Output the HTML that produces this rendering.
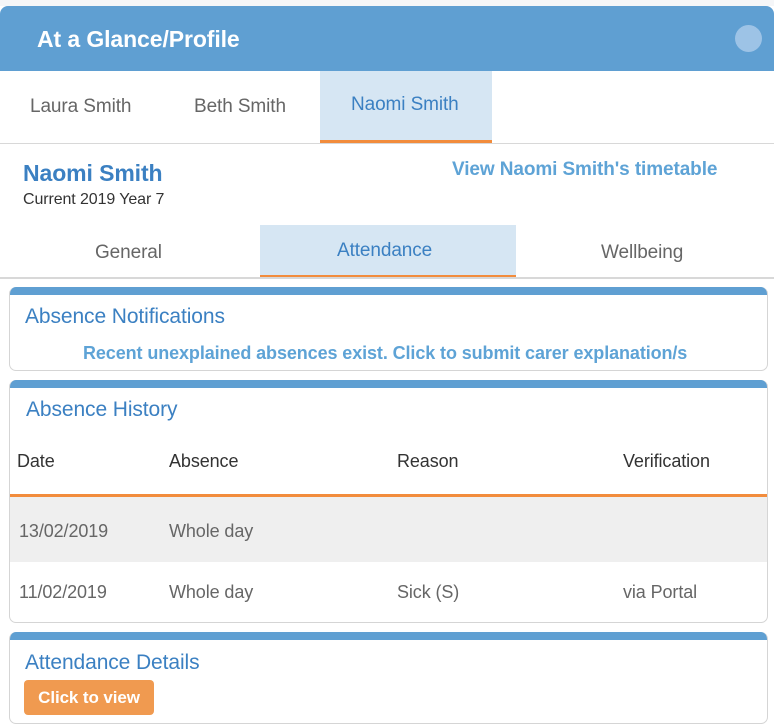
<!DOCTYPE html>
<html><head><style>
*{box-sizing:border-box;margin:0;padding:0}
body{width:774px;height:728px;background:#fff;font-family:"Liberation Sans",sans-serif;position:relative;overflow:hidden;letter-spacing:-0.1px}
.a{position:absolute;white-space:nowrap}
.hdr{left:0;top:6px;width:774px;height:65px;background:#5f9fd2;border-radius:8px 8px 0 0}
.card{position:absolute;left:9px;width:759px;border:1px solid #d5d5d5;border-top:none;border-radius:7px;background:#fff;overflow:hidden}
.card .bar{height:8px;background:#5f9fd2}
.blue{color:#3b80c2}
.lb{color:#5ea3d6}
.g{color:#666}
</style></head><body>
<div style="position:absolute;left:0;top:0;width:774px;height:6px;background:#f5f6f8"></div>
<div class="a hdr"></div>
<div class="a" style="left:37px;top:26px;font-size:23px;color:#fff;font-weight:bold">At a Glance/Profile</div>
<div class="a" style="left:735px;top:25px;width:27px;height:27px;border-radius:50%;background:#9dc3e6"></div>

<div class="a" style="left:320px;top:71px;width:172px;height:72px;background:#d6e6f3;border-bottom:3px solid #f28c3c"></div>
<div class="a" style="left:0;top:143px;width:774px;height:1px;background:#d8d8d8"></div>
<div class="a g" style="left:30px;top:96px;font-size:19px">Laura Smith</div>
<div class="a g" style="left:194px;top:96px;font-size:19px">Beth Smith</div>
<div class="a blue" style="left:351px;top:94px;font-size:19px">Naomi Smith</div>

<div class="a blue" style="left:23px;top:160px;font-size:23px;font-weight:bold">Naomi Smith</div>
<div class="a" style="left:23px;top:191px;font-size:16px;color:#333">Current 2019 Year 7</div>
<div class="a lb" style="left:452px;top:159px;font-size:19px;font-weight:bold">View Naomi Smith's timetable</div>

<div class="a" style="left:260px;top:225px;width:256px;height:53px;background:#d6e6f3;border-bottom:3px solid #f28c3c"></div>
<div class="a" style="left:0;top:277px;width:774px;height:2px;background:#d8d8d8"></div>
<div class="a g" style="left:95px;top:242px;font-size:19px">General</div>
<div class="a blue" style="left:337px;top:240px;font-size:19px">Attendance</div>
<div class="a g" style="left:601px;top:242px;font-size:19px">Wellbeing</div>

<div class="card" style="top:287px;height:84px"><div class="bar"></div></div>
<div class="a blue" style="left:25px;top:305px;font-size:21px">Absence Notifications</div>
<div class="a lb" style="left:83px;top:343px;font-size:18px;font-weight:bold">Recent unexplained absences exist. Click to submit carer explanation/s</div>

<div class="card" style="top:380px;height:243px"><div class="bar"></div></div>
<div class="a blue" style="left:26px;top:398px;font-size:21px">Absence History</div>
<div class="a" style="left:17px;top:451px;font-size:18px;color:#333">Date</div>
<div class="a" style="left:169px;top:451px;font-size:18px;color:#333">Absence</div>
<div class="a" style="left:397px;top:451px;font-size:18px;color:#333">Reason</div>
<div class="a" style="left:623px;top:451px;font-size:18px;color:#333">Verification</div>
<div class="a" style="left:10px;top:494px;width:757px;height:3px;background:#f28c3c"></div>
<div class="a" style="left:10px;top:497px;width:757px;height:65px;background:#efefef"></div>
<div class="a g" style="left:19px;top:521px;font-size:18px">13/02/2019</div>
<div class="a g" style="left:169px;top:521px;font-size:18px">Whole day</div>
<div class="a g" style="left:19px;top:582px;font-size:18px">11/02/2019</div>
<div class="a g" style="left:169px;top:582px;font-size:18px">Whole day</div>
<div class="a g" style="left:397px;top:582px;font-size:18px">Sick (S)</div>
<div class="a g" style="left:623px;top:582px;font-size:18px">via Portal</div>

<div class="card" style="top:632px;height:92px"><div class="bar"></div></div>
<div class="a blue" style="left:25px;top:651px;font-size:21px">Attendance Details</div>
<div class="a" style="left:24px;top:680px;width:130px;height:35px;background:#f09a50;border-radius:4px;color:#fff;font-size:17px;font-weight:bold;text-align:center;line-height:36px">Click to view</div>
</body></html>
